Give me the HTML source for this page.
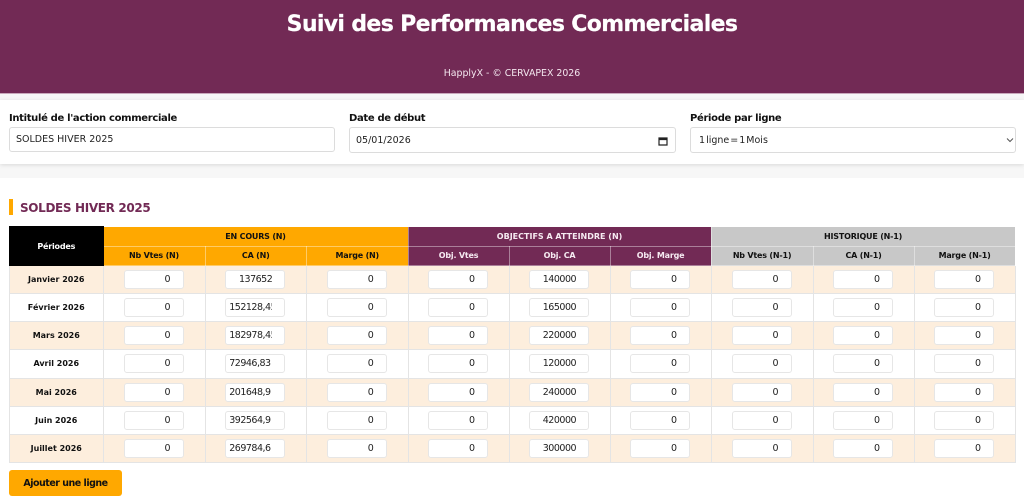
<!DOCTYPE html>
<html lang="fr">
<head>
<meta charset="utf-8">
<title>Suivi des Performances Commerciales</title>
<style>
*{box-sizing:border-box}
html,body{margin:0;padding:0;width:1024px;height:502px;overflow:hidden;background:#fff;font-family:"DejaVu Sans","Liberation Sans",sans-serif;color:#111}
.a{position:absolute;white-space:nowrap}
#hdr{left:0;top:0;width:1024px;height:94px;background:#722a55;border-bottom:1px solid #c9a9bc}
#title{left:0;top:9px;width:1024px;text-align:center;color:#fff;font-weight:700;font-size:22px;line-height:32px;letter-spacing:-.65px;-webkit-text-stroke:.2px #fff}
#sub{left:0;top:66px;width:1024px;text-align:center;color:#f3e6ee;font-size:9.4px;line-height:14px;padding-top:.5px}
#band{left:0;top:94px;width:1024px;height:84px;background:#f7f7f7}
#card{left:0;top:100px;width:1024px;height:64px;background:#fff;box-shadow:0 1px 4px rgba(0,0,0,.12)}
.lbl{top:110px;font-weight:700;font-size:10px;line-height:15px;color:#111;letter-spacing:-.33px;padding-top:.5px}
.fld{top:127px;height:26px;background:#fff;border:1px solid #dcdcdc;border-radius:3px;font-size:9.5px;line-height:24px;padding-left:6px;color:#222}
#h2bar{left:9px;top:199px;width:4px;height:16px;background:#ffa800}
#h2{left:20px;top:200px;font-size:12px;line-height:17px;font-weight:700;color:#722a55;letter-spacing:-.35px}
table{position:absolute;left:9px;top:226px;width:1006px;height:236px;border-collapse:collapse;table-layout:fixed}
th,td{padding:0;text-align:center;font-weight:700;font-size:8px;border:1px solid #e4e4e4}
th{border-color:rgba(255,255,255,.4);letter-spacing:-.2px}
th.w{letter-spacing:0}
.k{background:#000;color:#fff;border-color:#000}
.o{background:#ffa800;color:#111}
.p{background:#722a55;color:#f6eaf1}
.g{background:#c8c8c8;color:#111}
tbody tr:nth-child(odd) td{background:#fdeedd}
tbody tr:nth-child(even) td{background:#fff}
thead tr{height:19.5px}
tbody tr{height:28.14px}
td input{display:block;position:relative;left:-.5px;margin:0 auto;width:60px;height:19px;border:1px solid #e6e6e6;border-radius:3px;background:#fff;font-family:"DejaVu Sans","Liberation Sans",sans-serif;font-size:9.5px;color:#222;text-align:right;padding:0 12px 0 3px;outline:0}
td input.l{text-align:left;padding:0 12px 0 3px;letter-spacing:-.5px}
td input.r{letter-spacing:-.5px}
#btn{left:9px;top:470px;width:113px;height:26px;background:#ffa800;border-radius:3px;color:#111;font-weight:700;font-size:9.5px;line-height:27px;text-align:center;letter-spacing:-.5px}
</style>
</head>
<body>
<div class="a" id="hdr"></div>
<div class="a" id="title">Suivi des Performances Commerciales</div>
<div class="a" id="sub">HapplyX - © CERVAPEX 2026</div>
<div class="a" id="band"></div>
<div class="a" id="card"></div>

<div class="a lbl" style="left:9px">Intitulé de l'action commerciale</div>
<div class="a fld" style="left:9px;width:326px;height:25px;line-height:24px">SOLDES HIVER 2025</div>

<div class="a lbl" style="left:349px">Date de début</div>
<div class="a fld" style="left:349px;width:327px;line-height:25px">05/01/2026</div>
<svg class="a" style="left:658px;top:136px" width="10" height="10" viewBox="0 0 10 10"><path d="M1 2h8v7H1z M1 3.5h8" fill="none" stroke="#222" stroke-width="1.2"/><path d="M1 2h8v2H1z" fill="#222"/></svg>

<div class="a lbl" style="left:690px">Période par ligne</div>
<div class="a fld" style="left:690px;width:326px;padding-left:8px;line-height:25px;word-spacing:-2px">1 ligne = 1 Mois</div>
<svg class="a" style="left:1006px;top:137px" width="8" height="6" viewBox="0 0 8 6"><path d="M1 1.5L4 4.5L7 1.5" fill="none" stroke="#555" stroke-width="1"/></svg>

<div class="a" id="h2bar"></div>
<div class="a" id="h2">SOLDES HIVER 2025</div>

<table>
<colgroup><col style="width:93.5px"><col style="width:102px"><col style="width:101.5px"><col style="width:101.5px"><col style="width:101px"><col style="width:101px"><col style="width:101px"><col style="width:102px"><col style="width:101px"><col style="width:101px"></colgroup>
<thead>
<tr><th class="k" rowspan="2">Périodes</th><th class="o" colspan="3">EN COURS (N)</th><th class="p w" colspan="3">OBJECTIFS A ATTEINDRE (N)</th><th class="g" colspan="3">HISTORIQUE (N-1)</th></tr>
<tr><th class="o">Nb Vtes (N)</th><th class="o">CA (N)</th><th class="o">Marge (N)</th><th class="p">Obj. Vtes</th><th class="p">Obj. CA</th><th class="p">Obj. Marge</th><th class="g">Nb Vtes (N-1)</th><th class="g">CA (N-1)</th><th class="g">Marge (N-1)</th></tr>
</thead>
<tbody>
<tr><td>Janvier 2026</td><td><input value="0"></td><td><input class="r" value="137652"></td><td><input value="0"></td><td><input value="0"></td><td><input class="r" value="140000"></td><td><input value="0"></td><td><input value="0"></td><td><input value="0"></td><td><input value="0"></td></tr>
<tr><td>Février 2026</td><td><input value="0"></td><td><input class="l" value="152128,45"></td><td><input value="0"></td><td><input value="0"></td><td><input class="r" value="165000"></td><td><input value="0"></td><td><input value="0"></td><td><input value="0"></td><td><input value="0"></td></tr>
<tr><td>Mars 2026</td><td><input value="0"></td><td><input class="l" value="182978,45"></td><td><input value="0"></td><td><input value="0"></td><td><input class="r" value="220000"></td><td><input value="0"></td><td><input value="0"></td><td><input value="0"></td><td><input value="0"></td></tr>
<tr><td>Avril 2026</td><td><input value="0"></td><td><input class="l" value="72946,83"></td><td><input value="0"></td><td><input value="0"></td><td><input class="r" value="120000"></td><td><input value="0"></td><td><input value="0"></td><td><input value="0"></td><td><input value="0"></td></tr>
<tr><td>Mai 2026</td><td><input value="0"></td><td><input class="l" value="201648,9"></td><td><input value="0"></td><td><input value="0"></td><td><input class="r" value="240000"></td><td><input value="0"></td><td><input value="0"></td><td><input value="0"></td><td><input value="0"></td></tr>
<tr><td>Juin 2026</td><td><input value="0"></td><td><input class="l" value="392564,9"></td><td><input value="0"></td><td><input value="0"></td><td><input class="r" value="420000"></td><td><input value="0"></td><td><input value="0"></td><td><input value="0"></td><td><input value="0"></td></tr>
<tr><td>Juillet 2026</td><td><input value="0"></td><td><input class="l" value="269784,6"></td><td><input value="0"></td><td><input value="0"></td><td><input class="r" value="300000"></td><td><input value="0"></td><td><input value="0"></td><td><input value="0"></td><td><input value="0"></td></tr>
</tbody>
</table>

<div class="a" id="btn">Ajouter une ligne</div>
</body>
</html>
